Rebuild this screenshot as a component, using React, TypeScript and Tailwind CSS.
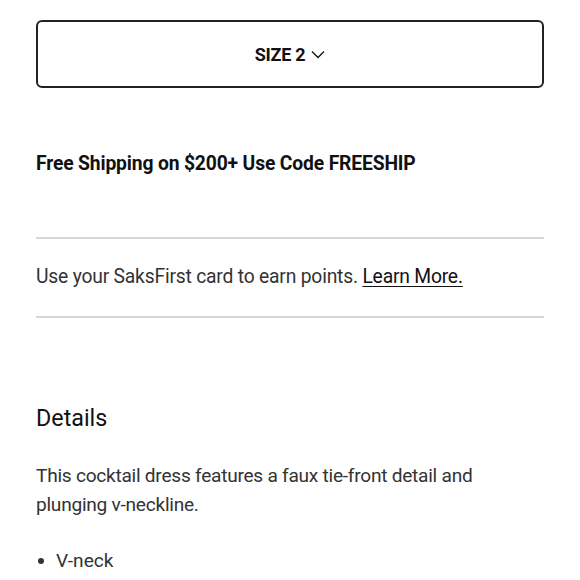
import React from "react";

export default function App() {
  return (
    <div className="w-[580px] h-[580px] bg-white overflow-hidden" style={{ fontFamily: "Roboto, 'Liberation Sans', sans-serif" }}>
      <div className="px-[36px] pt-[20px]">
        <button className="w-full h-[68px] rounded-[6px] border-2 border-[#222] flex items-center justify-center gap-[6px]">
          <span className="text-[18px] font-bold text-[#111] tracking-[-0.3px]">SIZE 2</span>
          <svg width="14" height="9" viewBox="0 0 14 9" fill="none" stroke="#111" strokeWidth="1.3">
            <path d="M1 1.5 L7 7.5 L13 1.5" />
          </svg>
        </button>
        <div className="mt-[64px] text-[19.3px] font-bold text-[#111] tracking-[-0.15px] leading-[24px]">
          Free Shipping on $200+ Use Code FREESHIP
        </div>
        <div className="mt-[61px] border-t-2 border-[#d6d6d6]" />
        <div className="pt-[26px] pb-[27px] text-[19.3px] text-[#333] leading-[24px] tracking-[-0.2px]">
          Use your SaksFirst card to earn points. <a className="underline text-[#111] underline-offset-[3px]">Learn More.</a>
        </div>
        <div className="border-t-2 border-[#d6d6d6]" />
        <div className="mt-[85px] text-[23.3px] text-[#111] leading-[30px]">Details</div>
        <p className="mt-[28px] text-[19.1px] text-[#333] leading-[29px] tracking-[-0.25px]">
          This cocktail dress features a faux tie-front detail and plunging v-neckline.
        </p>
        <ul className="mt-[27px] text-[19.1px] text-[#333] leading-[29px]">
          <li className="flex items-center">
            <span className="w-[6px] h-[6px] rounded-full bg-[#333] ml-[2px] mr-[12px]" />
            V-neck
          </li>
        </ul>
      </div>
    </div>
  );
}
